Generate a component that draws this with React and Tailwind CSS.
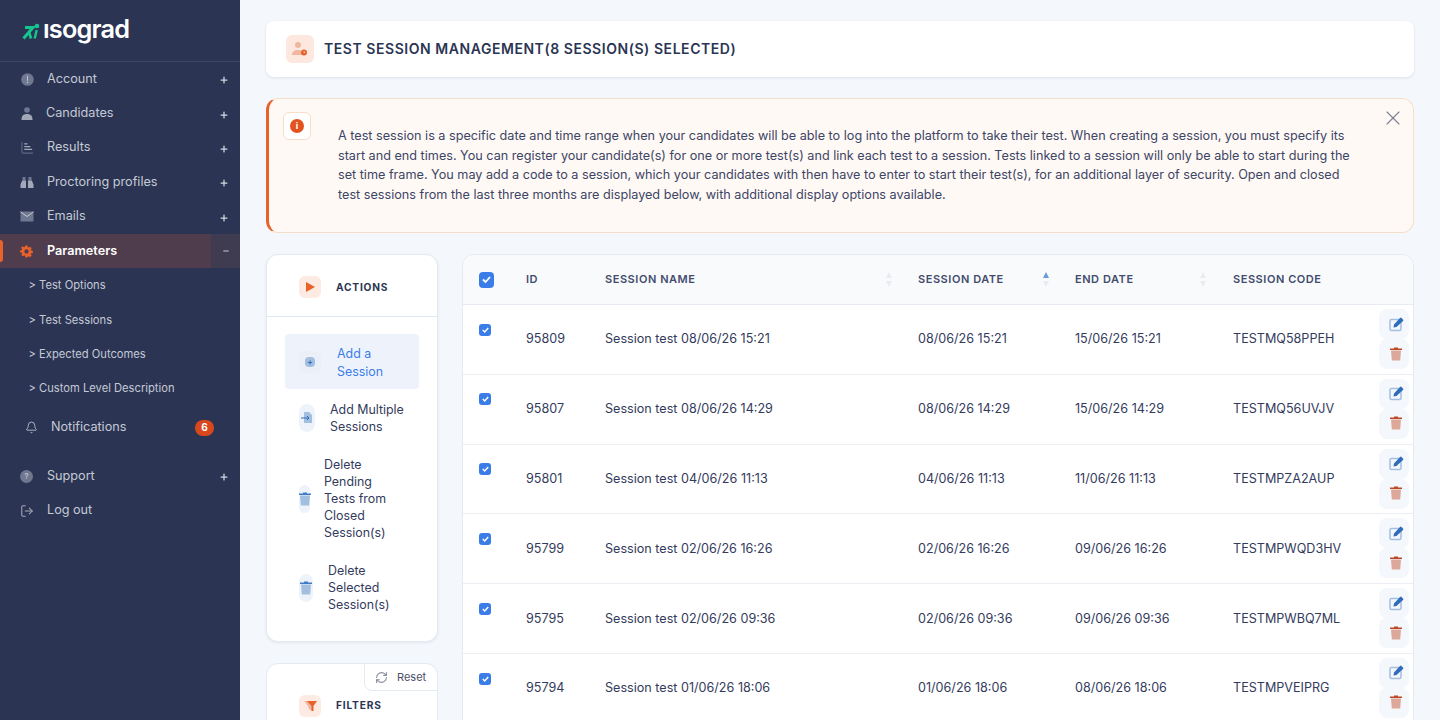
import { Bell, LogOut, RefreshCw, X, Plus, Minus } from 'lucide-react';

const menuTop = [
  { label: 'Account', icon: 'info' },
  { label: 'Candidates', icon: 'user', x: 'ml-[12px]' },
  { label: 'Results', icon: 'chart' },
  { label: 'Proctoring profiles', icon: 'binoculars' },
  { label: 'Emails', icon: 'mail' },
];

const subItems = ['> Test Options', '> Test Sessions', '> Expected Outcomes', '> Custom Level Description'];

const rows = [
  ['95809', 'Session test 08/06/26 15:21', '08/06/26 15:21', '15/06/26 15:21', 'TESTMQ58PPEH'],
  ['95807', 'Session test 08/06/26 14:29', '08/06/26 14:29', '15/06/26 14:29', 'TESTMQ56UVJV'],
  ['95801', 'Session test 04/06/26 11:13', '04/06/26 11:13', '11/06/26 11:13', 'TESTMPZA2AUP'],
  ['95799', 'Session test 02/06/26 16:26', '02/06/26 16:26', '09/06/26 16:26', 'TESTMPWQD3HV'],
  ['95795', 'Session test 02/06/26 09:36', '02/06/26 09:36', '09/06/26 09:36', 'TESTMPWBQ7ML'],
  ['95794', 'Session test 01/06/26 18:06', '01/06/26 18:06', '08/06/26 18:06', 'TESTMPVEIPRG'],
];

function MenuIcon({ name }) {
  const c = '#6f7890';
  if (name === 'info') {
    return (
      <svg width="13" height="13" viewBox="0 0 14 14">
        <circle cx="7" cy="7" r="6.8" fill={c} />
        <rect x="6.500" y="3" width="1" height="5.500" fill="#c6cad6" />
        <circle cx="7" cy="10.300" r="0.800" fill="#c6cad6" />
      </svg>
    );
  }
  if (name === 'user') {
    return (
      <svg width="12" height="13" viewBox="0 0 12 13">
        <circle cx="6" cy="3" r="2.800" fill={c} />
        <path d="M0.500 13c0-4 1.500-6 5.500-6s5.500 2 5.500 6z" fill="#a3a8b8" />
      </svg>
    );
  }
  if (name === 'chart') {
    return (
      <svg width="13" height="13" viewBox="0 0 14 14" fill="none">
        <path d="M1 1v10.500a1.500 1.500 0 0 0 1.500 1.500H13" stroke="#5e6780" strokeWidth="1.200" />
        <path d="M3.500 3H7M3.500 6H10M3.500 9H12" stroke="#a3a8b8" strokeWidth="1.300" />
      </svg>
    );
  }
  if (name === 'binoculars') {
    return (
      <svg width="14" height="13" viewBox="0 0 14 13">
        <path d="M2.500 1h3v3.500h-3zM8.500 1h3v3.500h-3z" fill={c} />
        <path d="M2.200 4.500h3.800V12H0.500V8.500zM8 4.500h3.800L13.500 8.500V12H8z" fill="#a3a8b8" />
      </svg>
    );
  }
  return (
    <svg width="14" height="11" viewBox="0 0 14 11">
      <rect width="13" height="10" x="0.500" y="0.500" fill={c} rx="0.500" />
      <path d="M0.500 0.800 7 5.500l6.500-4.700" fill="none" stroke="#c6cad6" strokeWidth="1" />
    </svg>
  );
}

function Gear() {
  return (
    <svg width="13" height="13" viewBox="0 0 24 24">
      <path
        fill="#e8622b"
        fillRule="evenodd"
        d="M10 1h4l.6 3.100 1.700.7 2.600-1.800 2.800 2.800-1.800 2.600.7 1.700 3.100.6v4l-3.100.6-.7 1.700 1.800 2.600-2.800 2.800-2.600-1.800-1.700.7L14 23h-4l-.6-3.100-1.700-.7-2.600 1.800-2.800-2.800 1.800-2.600-.7-1.700L0 14v-4l3.100-.6.7-1.700L2 5.100l2.800-2.800 2.600 1.800 1.700-.7zM12 8a4 4 0 1 0 0 8 4 4 0 0 0 0-8z"
      />
    </svg>
  );
}

function Logo() {
  return (
    <div className="flex items-center h-[62px] pl-[22px] border-b border-[#3b4564]">
      <svg width="18" height="17" viewBox="0 0 18 17" className="mt-[1px]">
        <circle cx="15" cy="3" r="2.300" fill="#14c78f" />
        <path d="M3 4.500h8L1.500 15.500" fill="none" stroke="#14c78f" strokeWidth="3" />
        <path d="M7 9l2 6.500" fill="none" stroke="#14c78f" strokeWidth="2.600" />
        <path d="M14.700 7l-2 8.500" fill="none" stroke="#14c78f" strokeWidth="2.400" />
      </svg>
      <span className="ml-[3px] text-[25.300px] leading-none font-semibold text-white tracking-[-0.8px] -mt-[3px]">ısograd</span>
    </div>
  );
}

function Sidebar() {
  return (
    <aside className="w-[240px] shrink-0 h-full bg-[#2b3553] text-[12.650px] text-[#c5c9d6]">
      <Logo />
      <nav>
        {menuTop.map((m) => (
          <div key={m.label} className="flex items-center h-[34.400px] pl-[20px]">
            <span className="w-[14px] flex justify-center">
              <MenuIcon name={m.icon} />
            </span>
            <span className={m.x || 'ml-[13px]'}>{m.label}</span>
            <Plus size={10} strokeWidth={3} className="ml-auto mr-[11px] mt-[2px] text-[#d5d8e0]" />
          </div>
        ))}
        <div className="relative flex items-center h-[34.400px] pl-[20px] bg-[#4f3c4c] text-white font-semibold">
          <span className="absolute left-0 top-[6px] bottom-[6px] w-[3px] bg-[#e8622b] rounded-r-sm" />
          <Gear />
          <span className="ml-[14px]">Parameters</span>
          <span className="ml-auto w-[29px] h-full flex items-center justify-center bg-[#3f3b50]">
            <Minus size={8} strokeWidth={3} className="text-[#c5c9d6]" />
          </span>
        </div>
        {subItems.map((s) => (
          <div key={s} className="flex items-center h-[34.400px] pl-[28.500px] text-[11.200px]">
            {s}
          </div>
        ))}
        <div className="flex items-center h-[44px] pl-[25px]">
          <Bell size={13} strokeWidth={1.500} className="text-[#c5c9d6]" />
          <span className="ml-[13px]">Notifications</span>
          <span className="ml-auto mr-[26px] w-[19px] h-[16px] rounded-full bg-[#d9481c] text-white text-[10px] font-bold flex items-center justify-center">6</span>
        </div>
        <div className="flex items-center h-[34.400px] pl-[20px] mt-[9.400px]">
          <span className="w-[13px] h-[13px] rounded-full bg-[#6f7890] text-[#b5bac8] text-[8px] font-bold flex items-center justify-center">?</span>
          <span className="ml-[14px]">Support</span>
          <Plus size={10} strokeWidth={3} className="ml-auto mr-[11px] mt-[2px] text-[#d5d8e0]" />
        </div>
        <div className="flex items-center h-[34.400px] pl-[20px]">
          <LogOut size={14} strokeWidth={1.800} className="text-[#a3a8b8]" />
          <span className="ml-[13px]">Log out</span>
        </div>
      </nav>
    </aside>
  );
}

function Header() {
  return (
    <div className="flex items-center h-[56px] bg-white rounded-lg shadow-[0_1px_3px_rgba(30,50,90,0.1)] pl-[20px]">
      <div className="w-[28px] h-[28px] rounded-md bg-[#fce8df] flex items-center justify-center">
        <svg width="18" height="16" viewBox="0 0 18 16">
          <circle cx="7" cy="4" r="3" fill="#f0b7a0" />
          <path d="M1 14c0-3.500 2.500-5 6-5s4 1 4 2v3z" fill="#f0b7a0" />
          <circle cx="13" cy="11.500" r="3" fill="#e8622b" />
          <path d="M13 10v1.500h1.200" fill="none" stroke="#fce8df" strokeWidth="0.700" />
        </svg>
      </div>
      <h1 className="ml-[10px] pb-[1px] text-[14px] font-semibold tracking-[0.55px] text-[#2b3553]">TEST SESSION MANAGEMENT(8 SESSION(S) SELECTED)</h1>
    </div>
  );
}

function Alert() {
  return (
    <div className="relative mt-[21px] h-[135px] bg-[#fff9f5] border border-[#f6dfc9] border-l-[3px] border-l-[#e8622b] rounded-xl pl-[69px] pr-[60px] pt-[27.300px] text-[12.650px] leading-[19.600px] text-[#3d4566]">
      <div className="absolute left-[14px] top-[13px] w-[28px] h-[28px] bg-white border border-[#f6dfc9] rounded-md flex items-center justify-center">
        <span className="w-[14px] h-[14px] rounded-full bg-[#e2531f] text-white text-[9px] font-bold flex items-center justify-center">i</span>
      </div>
      <X size={24} strokeWidth={1.100} className="absolute right-[8px] top-[7px] text-[#7b8194]" />
      <p>
        A test session is a specific date and time range when your candidates will be able to log into the platform to take their test. When creating a session, you must specify its start and end times. You can register your candidate(s) for one or more test(s) and link each test to a session. Tests linked to a session will only be able to start during the set time frame. You may add a code to a session, which your candidates with then have to enter to start their test(s), for an additional layer of security. Open and closed test sessions from the last three months are displayed below, with additional display options available.
      </p>
    </div>
  );
}

function Trash({ color = '#3f7cc4', body = '#a3bfe0' }) {
  return (
    <svg width="12" height="14" viewBox="0 0 12 14" className="shrink-0">
      <rect x="0" y="1.500" width="12" height="1.500" fill={color} />
      <rect x="4" y="0.500" width="4" height="1.500" fill={color} />
      <path d="M1 3.500h10l-.8 10H1.800z" fill={body} />
    </svg>
  );
}

function ActionItem({ icon, lines, active, indent }) {
  return (
    <div className={`flex items-center rounded-sm ${active ? 'bg-[#eef3fb] text-[#3b7de8] h-[55px] pl-[14px]' : 'text-[#333b5c] py-[10px]'} ${indent || ''}`}>
      {icon}
      <div className={`text-[12.400px] leading-[17.200px] ${active ? 'mt-[2px]' : ''}`}>
        {lines.map((l) => (
          <div key={l}>{l}</div>
        ))}
      </div>
    </div>
  );
}

function ActionsCard() {
  return (
    <div className="bg-white border border-[#e4eaf2] rounded-xl shadow-[0_1px_3px_rgba(30,50,90,0.08)] h-[388px]">
      <div className="flex items-center h-[62px] pt-[2px] border-b border-[#e4eaf2] pl-[32px]">
        <div className="w-[22px] h-[22px] rounded-md bg-[#fdebe3] flex items-center justify-center">
          <svg width="9" height="10" viewBox="0 0 9 10"><path d="M0 0 9 5 0 10z" fill="#e8622b" /></svg>
        </div>
        <span className="ml-[15px] mt-[2px] text-[10.200px] font-bold tracking-[0.8px] text-[#2b3553]">ACTIONS</span>
      </div>
      <div className="px-[18px] pt-[17px]">
        <ActionItem
          active
          lines={['Add a', 'Session']}
          icon={
            <div className="w-[22px] h-[22px] mr-[16px] rounded-md bg-[#ebf0f8] flex items-center justify-center">
              <span className="w-[10px] h-[10px] bg-[#a3bfe0] rounded-sm flex items-center justify-center text-[#2f6dbb] text-[8px] leading-none font-bold">+</span>
            </div>
          }
        />
        <div className="flex flex-col pt-[1.600px] gap-[0.500px]">
          <ActionItem
            indent="pl-[14px]"
            lines={['Add Multiple', 'Sessions']}
            icon={
              <div className="w-[16px] h-[28px] mr-[15px] rounded-full bg-[#eef3fb] flex items-center justify-center shrink-0">
                <svg width="12" height="11" viewBox="0 0 12 11">
                  <path d="M3 0h5l3 3v8H3z" fill="#a3bfe0" />
                  <path d="M0 6h8M6 4l2 2-2 2" stroke="#2f6dbb" fill="none" strokeWidth="1" />
                </svg>
              </div>
            }
          />
          <ActionItem
            indent="pl-[14px]"
            lines={['Delete', 'Pending', 'Tests from', 'Closed', 'Session(s)']}
            icon={
              <div className="w-[11px] h-[28px] mr-[14px] rounded-full bg-[#eef3fb] flex items-center justify-center shrink-0">
                <Trash />
              </div>
            }
          />
          <ActionItem
            indent="pl-[14px]"
            lines={['Delete', 'Selected', 'Session(s)']}
            icon={
              <div className="w-[14px] h-[28px] mr-[15px] rounded-full bg-[#eef3fb] flex items-center justify-center shrink-0">
                <Trash />
              </div>
            }
          />
        </div>
      </div>
    </div>
  );
}

function FiltersCard() {
  return (
    <div className="relative mt-[21px] bg-white border border-[#e4eaf2] rounded-xl h-[140px]">
      <div className="absolute right-[-1px] top-[-1px] w-[74px] h-[28px] bg-white border border-[#e4eaf2] rounded-bl-lg rounded-tr-xl flex items-center pl-[10px] text-[11px] text-[#4a5068]">
        <RefreshCw size={13} strokeWidth={2} className="text-[#8a8f9f]" />
        <span className="ml-[9px]">Reset</span>
      </div>
      <div className="flex items-center pl-[32px] pt-[31px]">
        <div className="w-[22px] h-[22px] rounded-md bg-[#fdebe3] flex items-center justify-center">
          <svg width="13" height="10" viewBox="0 0 13 10">
            <path d="M0 0h6l2 5v5L5 8 4 5z" fill="#f0b7a0" />
            <path d="M3 0h10L9.500 5v5H7.500V5z" fill="#e8622b" />
          </svg>
        </div>
        <span className="ml-[15px] text-[10.200px] font-bold tracking-[0.8px] text-[#2b3553]">FILTERS</span>
      </div>
    </div>
  );
}

function Sort({ active }) {
  return (
    <span className="flex flex-col gap-[3px] items-center">
      <span className={`w-0 h-0 border-x-[3.500px] border-x-transparent border-b-[6px] ${active ? 'border-b-[#6b9bd6]' : 'border-b-[#e8ebf0]'}`} />
      <span className="w-0 h-0 border-x-[3.500px] border-x-transparent border-t-[6px] border-t-[#e8ebf0]" />
    </span>
  );
}

function Check({ big }) {
  return (
    <span className={`flex items-center justify-center bg-[#3b7de8] ${big ? 'w-[15px] h-[16px] rounded-[4px]' : 'w-[12px] h-[12px] rounded-[3px]'}`}>
      <svg width={big ? 9 : 7} height={big ? 7 : 6} viewBox="0 0 9 7" fill="none">
        <path d="M1 3.500 3.500 6 8 1" stroke="white" strokeWidth="1.800" />
      </svg>
    </span>
  );
}

const gridCols = 'grid grid-cols-[63px_79px_313px_157px_158px_146px_1fr]';

function SessionsTable() {
  const th = 'flex items-center text-[11px] font-semibold tracking-[0.55px] text-[#444c6d]';
  return (
    <div className="flex-1 min-w-0 bg-white border border-[#e4eaf2] rounded-xl overflow-hidden">
      <div className={`${gridCols} h-[50px] bg-[#f8fafc] border-b border-[#e8ebf2]`}>
        <div className="flex items-center pl-[16px]"><Check big /></div>
        <div className={th}>ID</div>
        <div className={`${th} justify-between pr-[26.500px]`}>SESSION NAME<Sort /></div>
        <div className={`${th} justify-between pr-[26px]`}>SESSION DATE<Sort active /></div>
        <div className={`${th} justify-between pr-[27.500px]`}>END DATE<Sort /></div>
        <div className={th}>SESSION CODE</div>
        <div />
      </div>
      {rows.map((r) => (
        <div key={r[0]} className={`${gridCols} h-[69.800px] border-b border-[#eceef3] text-[12.600px] text-[#333b5c]`}>
          <div className="pl-[16px] pt-[18.700px]"><Check /></div>
          {r.map((v) => (
            <div key={v} className="flex items-center pt-[0.800px]">{v}</div>
          ))}
          <div className="flex flex-col pt-[4px]">
            <span className="w-[30px] h-[30px] rounded-lg bg-[#f4f7fb] flex items-center justify-center pl-[4px]">
              <svg width="15" height="15" viewBox="0 0 15 15" fill="none">
                <rect x="1" y="2.500" width="11" height="11" rx="1.500" stroke="#a3bfe0" strokeWidth="1.500" />
                <path d="M4.500 10.500 5 7.500l6-6.500a1 1 0 0 1 1.500 0l1.500 1.500a1 1 0 0 1 0 1.500L7.500 10z" fill="#2f6dbb" />
              </svg>
            </span>
            <span className="w-[30px] h-[30px] rounded-lg bg-[#f4f7fb] flex items-center justify-center pl-[4px] pb-[1px]">
              <Trash color="#bc4a28" body="#dca89a" />
            </span>
          </div>
        </div>
      ))}
    </div>
  );
}

export default function App() {
  return (
    <div className="flex h-screen overflow-hidden bg-[#f4f7fb] font-['Inter',sans-serif]">
      <Sidebar />
      <main className="flex-1 min-w-0 px-[26px] pt-[21px]">
        <Header />
        <Alert />
        <div className="flex gap-[24px] mt-[21px]">
          <div className="w-[172px] shrink-0">
            <ActionsCard />
            <FiltersCard />
          </div>
          <SessionsTable />
        </div>
      </main>
    </div>
  );
}
